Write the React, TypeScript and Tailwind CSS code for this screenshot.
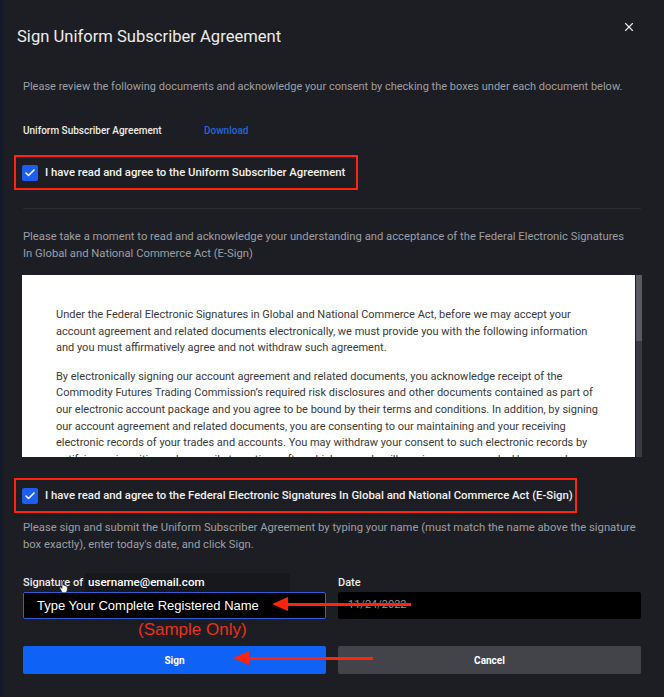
import { X, Check } from 'lucide-react';

const sans = { fontFamily: 'Roboto, "Liberation Sans", sans-serif' };

function CheckRow({ label, width }: { label: string; width: string }) {
  return (
    <div className={`flex h-[35px] items-center gap-[7px] border-2 border-[#ff2410] pl-[6px] ${width}`}>
      <span className="flex h-[16px] w-[16px] items-center justify-center rounded-[2px] bg-[#1c5ef0]">
        <Check size={12} strokeWidth={3.2} className="text-white" />
      </span>
      <span className="text-[11.35px] font-medium text-[#f2f2f2]">{label}</span>
    </div>
  );
}

function Arrow({ className }: { className: string }) {
  return (
    <div className={`pointer-events-none absolute flex items-center ${className}`}>
      <svg width="16" height="14" viewBox="0 0 16 14">
        <polygon points="0,7 16,0 16,14" fill="#ff2410" />
      </svg>
      <div className="h-[3px] flex-1 bg-[#ff2410]" />
    </div>
  );
}

export default function App() {
  return (
    <div className="relative h-[697px] w-[664px] overflow-hidden bg-[#1d1e23]" style={sans}>
      <div className="absolute left-0 top-0 h-full w-[3px] bg-[#161a28]" />
      <button className="absolute right-[28px] top-[20px] text-[#e6e6e6]">
        <X size={14} strokeWidth={2} />
      </button>

      <h1 className="pl-[17px] pt-[26px] text-[16.6px] leading-[22px] text-[#ececec]">
        Sign Uniform Subscriber Agreement
      </h1>

      <div className="px-[23px]">
        <p className="mt-[31px] text-[11px] leading-[16px] text-[#9c9ea4]">
          Please review the following documents and acknowledge your consent by checking the boxes under each document below.
        </p>

        <div className="mt-[29px] flex h-[14px] items-center text-[10px] leading-[14px]">
          <span className="w-[181px] font-medium text-[#ececec]">Uniform Subscriber Agreement</span>
          <span className="font-medium text-[#2466d8]">Download</span>
        </div>
      </div>

      <div className="mt-[17px] pl-[14px]">
        <CheckRow label="I have read and agree to the Uniform Subscriber Agreement" width="w-[344px]" />
      </div>

      <div className="mx-[23px] mt-[18px] h-px bg-[#2b2c32]" />

      <div className="pl-[23px] pr-[12px]">
        <p className="mt-[19px] text-[11.25px] leading-[17px] text-[#9c9ea4]">
          Please take a moment to read and acknowledge your understanding and acceptance of the Federal Electronic Signatures
          <br />
          In Global and National Commerce Act (E-Sign)
        </p>
      </div>

      <div className="ml-[22px] mt-[13px] flex h-[182px] w-[620px]">
        <div className="h-full w-[613px] overflow-hidden whitespace-nowrap bg-white pl-[34px] pt-[32px] text-[11px] leading-[16.6px] text-[#393939]">
          <p>
            Under the Federal Electronic Signatures in Global and National Commerce Act, before we may accept your
            <br />
            account agreement and related documents electronically, we must provide you with the following information
            <br />
            and you must affirmatively agree and not withdraw such agreement.
          </p>
          <p className="mt-[12px]">
            By electronically signing our account agreement and related documents, you acknowledge receipt of the
            <br />
            Commodity Futures Trading Commission’s required risk disclosures and other documents contained as part of
            <br />
            our electronic account package and you agree to be bound by their terms and conditions. In addition, by signing
            <br />
            our account agreement and related documents, you are consenting to our maintaining and your receiving
            <br />
            electronic records of your trades and accounts. You may withdraw your consent to such electronic records by
            <br />
            notifying us in writing or by e-mail at any time, after which you only will receive paper records. However, please
          </p>
        </div>
        <div className="ml-[1px] flex h-full w-[6px] flex-col bg-[#3a3b41]">
          <div className="h-[66px] bg-[#5a5b61]" />
        </div>
      </div>

      <div className="mt-[21px] pl-[14px]">
        <CheckRow
          label="I have read and agree to the Federal Electronic Signatures In Global and National Commerce Act (E-Sign)"
          width="w-[563px]"
        />
      </div>

      <div className="px-[23px]">
        <p className="-mr-[12px] mt-[6px] text-[11.25px] leading-[17px] text-[#9c9ea4]">
          Please sign and submit the Uniform Subscriber Agreement by typing your name (must match the name above the signature
          <br />
          box exactly), enter today's date, and click Sign.
        </p>

        <div className="mt-[23px] grid grid-cols-2 gap-x-[12px]">
          <div>
            <div className="relative flex h-[14px] items-center text-[11px] font-medium text-[#ececec]">
              <span>Signature of</span>
              <span className="absolute left-[62px] top-[-3px] flex h-[19px] w-[205px] items-center bg-[#17181c] pl-[3px] text-[11.6px] font-medium text-white">
                username@email.com
              </span>
              <svg className="absolute left-[36px] top-[3px]" width="10" height="14" viewBox="0 0 10 14">
                <path d="M3 1.2c.6 0 1 .4 1 1V6l.5-.2c.5 0 .9.3.9.7l.6-.1c.5 0 .9.3.9.8l.5-.1c.5 0 .9.4.9.9v3c0 1.6-1.3 2.8-2.9 2.8H4.6c-.9 0-1.6-.5-2-1.2L1 9.4c-.3-.5-.1-1 .4-1.2.4-.2.8 0 1 .3l.6.9V2.2c0-.6.4-1 1-1z" fill="#fff" stroke="#222" strokeWidth="0.7" />
              </svg>
            </div>
            <div className="mt-[2px] flex h-[27px] items-center rounded-[2px] border border-[#2c5ed8] bg-black pl-[13px] text-[13px] text-white" style={{ fontFamily: '"Liberation Sans", Arial, sans-serif' }}>
              Type Your Complete Registered Name
            </div>
            <div className="h-[27px] pl-[115px] text-[17px] leading-[22px] text-[#e8321f]" style={{ fontFamily: '"Liberation Sans", Arial, sans-serif' }}>
              (Sample Only)
            </div>
            <button className="h-[28px] w-full rounded-[2px] bg-[#0f62f6] text-[10px] font-bold text-white">
              Sign
            </button>
          </div>
          <div>
            <div className="flex h-[14px] items-center text-[11px] font-medium text-[#ececec]">Date</div>
            <div className="mt-[2px] flex h-[27px] items-center rounded-[2px] bg-black pl-[10px] text-[11px] text-[#8e9096]">
              11/24/2022
            </div>
            <div className="h-[27px]" />
            <button className="h-[28px] w-full rounded-[2px] bg-[#43444a] text-[10px] font-bold text-white">
              Cancel
            </button>
          </div>
        </div>
      </div>

      <Arrow className="left-[272px] top-[597px] w-[139px]" />
      <Arrow className="left-[233px] top-[651px] w-[140px]" />
    </div>
  );
}
